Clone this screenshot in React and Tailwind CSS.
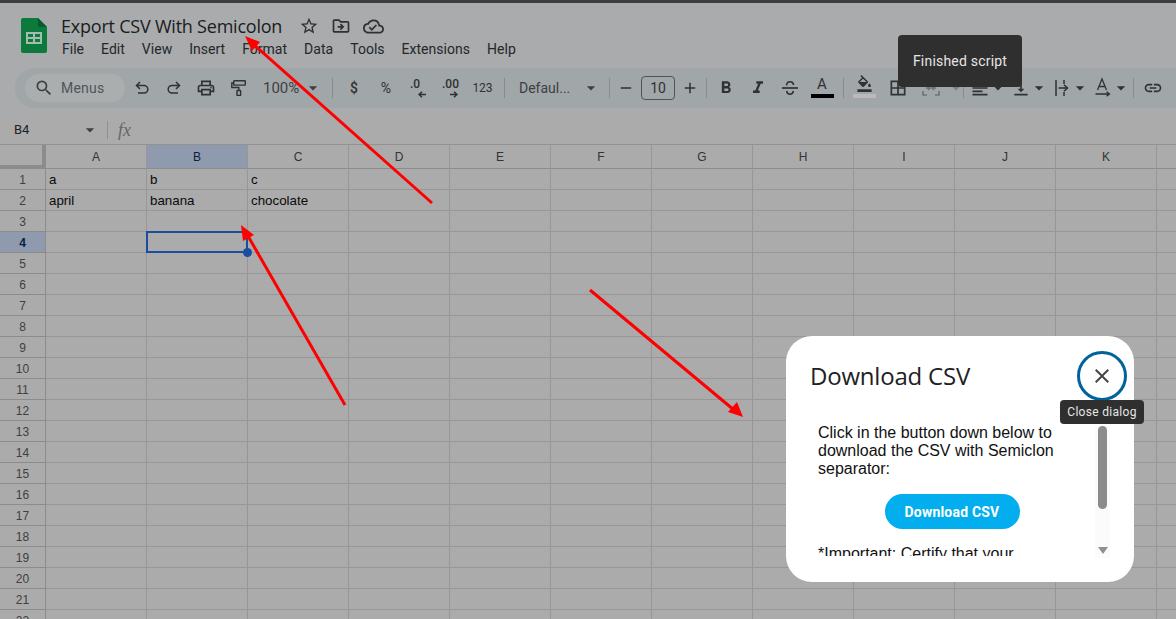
import React from "react";
import {
  MdOutlinePrint, MdFormatBold, MdFormatItalic,
  MdOutlineFormatColorFill, MdBorderAll, MdFormatAlignLeft, MdVerticalAlignBottom, MdLink, MdStarBorder,
  MdOutlineDriveFileMove, MdOutlineCloudDone, MdSearch, MdClose, MdAdd, MdRemove, MdArrowDropDown,
} from "react-icons/md";

const ink = "text-[#2f3133]";

function Slot({ w, children, className = "" }) {
  return <div className={`${w} h-[28px] shrink-0 flex items-center justify-center ${ink} ${className}`}>{children}</div>;
}
function Sep({ w }) {
  return (
    <div className={`${w} shrink-0 flex justify-center`}>
      <div className="w-px h-[20px] bg-[#888b8e]" />
    </div>
  );
}
function Caret({ w = "w-[4px]", className = "" }) {
  return (
    <Slot w={w} className={className}>
      <MdArrowDropDown className="shrink-0" size={20} />
    </Slot>
  );
}

function SheetsLogo() {
  return (
    <svg width="26" height="35" viewBox="0 0 26 35" className="shrink-0">
      <path d="M2 0H17L26 9V33a2 2 0 0 1-2 2H2a2 2 0 0 1-2-2V2a2 2 0 0 1 2-2Z" fill="#0c7a3c" />
      <path d="M17 0L26 9H19a2 2 0 0 1-2-2Z" fill="#075a2b" />
      <path d="M5 14H21V26H5ZM7 16V19H12V16ZM14 16V19H19V16ZM7 21V24H12V21ZM14 21V24H19V21Z" fill="#a6bcae" fillRule="evenodd" />
    </svg>
  );
}

function UndoIcon({ flip }) {
  return (
    <svg width="14" height="14" viewBox="0 0 14 14" fill="none" stroke="currentColor" strokeWidth="1.5" className={flip ? "-scale-x-100" : ""}>
      <path d="M5 1L1.5 4.5L5 8" />
      <path d="M2 4.5H9a3.7 3.7 0 0 1 0 7.6H3" />
    </svg>
  );
}
function PaintIcon() {
  return (
    <svg width="15" height="16" viewBox="0 0 15 16" fill="none" stroke="currentColor" strokeWidth="1.4">
      <rect x="2.7" y="0.7" width="11.6" height="4.4" rx="0.6" />
      <path d="M2.7 3H0.8V7.5H7.8V10.5" />
      <rect x="6" y="10.5" width="3.6" height="5" rx="0.6" />
    </svg>
  );
}
function StrikeIcon() {
  return (
    <svg width="18" height="16" viewBox="0 0 18 16" fill="none" stroke="currentColor" strokeWidth="1.5">
      <path d="M1 8H17" strokeWidth="1.7" />
      <path d="M5.5 5.5C5.7 3 7.2 1.8 9 1.8S12.4 3 12.6 5" />
      <path d="M5.6 11C6 13.2 7.3 14.2 9 14.2S12 13.2 12.4 11" />
    </svg>
  );
}
function DecimalArrow({ right }) {
  return (
    <svg width="8" height="7" viewBox="0 0 8 7" fill="none" stroke="currentColor" strokeWidth="1.5" className={right ? "" : "-scale-x-100"}>
      <path d="M0 3.5H7M4 0.8L7 3.5L4 6.2" />
    </svg>
  );
}
function WrapIcon() {
  return (
    <svg width="16" height="20" viewBox="0 0 16 20" fill="none" stroke="currentColor" strokeWidth="1.5">
      <path d="M2 2V18" />
      <path d="M10 2V6M10 14V18" />
      <path d="M4.5 10H13M10 6.8L13.5 10L10 13.2" />
    </svg>
  );
}
function RotateIcon() {
  return (
    <svg width="18" height="22" viewBox="0 0 18 22" fill="none" stroke="currentColor" strokeWidth="1.3">
      <path d="M3.5 13L8 2L12.5 13M5 9.5H11" />
      <path d="M1.5 17H15M12.5 14.8L15.5 17L12.5 19.2" />
    </svg>
  );
}
function MergeIcon() {
  return (
    <svg width="20" height="18" viewBox="0 0 20 18" fill="none" stroke="#6f7376" strokeWidth="1.6">
      <path d="M2 6V2H6M2 12V16H6M18 6V2H14M18 12V16H14" />
      <path d="M5 9H9M7 7L9 9L7 11M15 9H11M13 7L11 9L13 11" />
    </svg>
  );
}

function Toolbar() {
  return (
    <div className="ml-[15px] mt-[4px] h-[40px] rounded-l-[20px] bg-[#a1a6a9] flex items-center pl-[10px] font-['Roboto',sans-serif]">
      <div className="w-[100px] h-[28px] rounded-full bg-[#abaeaf] shrink-0 flex items-center pl-[9px] text-[#3d4043]">
        <MdSearch size={20} />
        <span className="ml-[7px] text-[14px] tracking-[0.2px] text-[#50545a]">Menus</span>
      </div>
      <div className="w-px shrink-0" />
      <Slot w="w-[32px]"><UndoIcon /></Slot>
      <Slot w="w-[32px]"><UndoIcon flip /></Slot>
      <Slot w="w-[32px]"><MdOutlinePrint size={20} /></Slot>
      <Slot w="w-[32px]"><PaintIcon /></Slot>
      <div className="w-[72px] h-[28px] shrink-0 flex items-center pl-[9px] text-[15px] text-[#3d4043]">
        <span>100%</span>
        <MdArrowDropDown className="ml-[4px] shrink-0" size={20} />
      </div>
      <Sep w="w-[12px]" />
      <Slot w="w-[32px]"><span className="text-[14px] font-medium">$</span></Slot>
      <Slot w="w-[32px]"><span className="text-[14px]">%</span></Slot>
      <Slot w="w-[32px]">
        <div className="flex flex-col leading-none w-[16px] -mt-[1px]">
          <span className="text-[12px] font-medium h-[13px] leading-[13px]">.0</span>
          <div className="pl-[8px]"><DecimalArrow /></div>
        </div>
      </Slot>
      <Slot w="w-[32px]">
        <div className="flex flex-col leading-none w-[16px] -mt-[1px]">
          <span className="text-[12px] font-medium h-[13px] leading-[13px]">.00</span>
          <div className="pl-[8px]"><DecimalArrow right /></div>
        </div>
      </Slot>
      <Slot w="w-[33px]"><span className="text-[12px]">123</span></Slot>
      <Sep w="w-[10px]" />
      <div className="w-[91px] h-[28px] shrink-0 flex items-center pl-[10px] text-[14px] text-[#3d4043]">
        <span className="w-[60px]">Defaul...</span>
        <MdArrowDropDown className="ml-[11px] shrink-0" size={20} />
      </div>
      <Sep w="w-[18px]" />
      <Slot w="w-[16px]"><MdRemove className="shrink-0" size={18} /></Slot>
      <Slot w="w-[48px]">
        <div className="w-[34px] h-[24px] rounded-[4px] border border-[#505356] flex items-center justify-center text-[14px]">10</div>
      </Slot>
      <Slot w="w-[16px]"><MdAdd className="shrink-0" size={18} /></Slot>
      <Sep w="w-[16px]" />
      <Slot w="w-[24px]"><MdFormatBold className="shrink-0" size={20} /></Slot>
      <Slot w="w-[40px]"><MdFormatItalic className="shrink-0" size={20} /></Slot>
      <Slot w="w-[24px]"><StrikeIcon /></Slot>
      <div className="w-[40px] h-[28px] pb-[4px] shrink-0 flex flex-col items-center justify-end">
        <span className="text-[15px] leading-[16px] text-[#2f3133]">A</span>
        <div className="w-[23px] h-[4px] mt-[2px] bg-black" />
      </div>
      <Sep w="w-[2px]" />
      <div className="w-[40px] h-[28px] pb-[4px] shrink-0 flex flex-col items-center justify-end text-[#2f3133]">
        <MdOutlineFormatColorFill className="mb-[2px]" size={17} />
        <div className="w-[23px] h-[4px] bg-[#b9bab9]" />
      </div>
      <Slot w="w-[28px]"><MdBorderAll className="shrink-0" size={20} /></Slot>
      <Slot w="w-[38px]"><MergeIcon /></Slot>
      <Caret w="w-[12px]" className="text-[#7c8083]" />
      <Sep w="w-[2px]" />
      <Slot w="w-[32px]"><MdFormatAlignLeft className="shrink-0" size={20} /></Slot>
      <Caret />
      <div className="w-[5px] shrink-0" />
      <Slot w="w-[32px]"><MdVerticalAlignBottom className="shrink-0" size={20} /></Slot>
      <Caret />
      <div className="w-[5px] shrink-0" />
      <Slot w="w-[32px]"><WrapIcon /></Slot>
      <Caret />
      <div className="w-[5px] shrink-0" />
      <Slot w="w-[32px]"><RotateIcon /></Slot>
      <Caret />
      <div className="w-[9px] shrink-0" />
      <Sep w="w-[2px]" />
      <Slot w="w-[38px]"><MdLink className="shrink-0" size={20} /></Slot>
    </div>
  );
}

const COLS = ["A", "B", "C", "D", "E", "F", "G", "H", "I", "J", "K", ""];
const DATA = { 1: ["a", "b", "c"], 2: ["april", "banana", "chocolate"] };
const ROWS = Array.from({ length: 22 }, (_, i) => i + 1);
const line = "border-r border-b border-[#979797]";

function Grid() {
  return (
    <div className="grid grid-cols-[46px_repeat(12,101px)] grid-rows-[24px_repeat(22,21px)] border-t border-[#929292] font-['Liberation_Sans',sans-serif]">
      <div className="border-r-[4px] border-b-[4px] border-[#8c8c8c] bg-[#ababab]" />
      {COLS.map((c) => (
        <div
          key={c || "L"}
          className={`${line} border-b-[#8c8c8c] flex items-center justify-center text-[12px] ${c === "B" ? "bg-[#8f9aae] text-[#0b1e3c] font-medium" : "text-[#333333]"}`}
        >
          {c}
        </div>
      ))}
      {ROWS.map((r) => (
        <React.Fragment key={r}>
          <div className={`border-r border-b border-[#8c8c8c] flex items-center justify-center pt-[1px] text-[12px] ${r === 4 ? "bg-[#8f9aae] text-[#0b1e3c] font-bold" : "text-[#3e4043]"}`}>
            {r}
          </div>
          {COLS.map((c, i) => (
            <div key={c || "L"} className={`relative ${r === 4 && c === "B" ? "z-10" : ""} ${line} flex items-end pl-[3px] pb-[1px] text-[13.33px] leading-[16px] text-[#0a0a0a]`}>
              {DATA[r] && DATA[r][i]}
              {r === 4 && c === "B" && (
                <div className="absolute -left-px -top-px w-[102px] h-[22px] border-2 border-[#1a4d9e]">
                  <div className="absolute -right-[6px] -bottom-[6px] w-[9px] h-[9px] rounded-full bg-[#1a4d9e]" />
                </div>
              )}
            </div>
          ))}
        </React.Fragment>
      ))}
    </div>
  );
}

function Arrows() {
  return (
    <svg className="absolute left-0 top-0 pointer-events-none z-20" width="1176" height="619" fill="none">
      <g stroke="#ff0000" strokeWidth="3">
        <path d="M432 203L252 43" />
        <path d="M345 405L248 236" />
        <path d="M590 290L734 410" />
      </g>
      <g fill="#ff0000">
        <path d="M245 36L260 42L252 51Z" />
        <path d="M241 225L254 235L243 241Z" />
        <path d="M743 417L728 412L737 402Z" />
      </g>
    </svg>
  );
}

function Dialog() {
  return (
    <div className="absolute z-30 left-[786px] top-[336px] w-[348px] h-[246px] rounded-[26px] bg-white flex flex-col">
      <div className="flex items-center h-[80px] pl-[24px] pr-[7px] shrink-0">
        <h2 className="flex-1 text-[24px] font-normal text-[#202124] font-['Open_Sans',sans-serif] tracking-[-0.2px]">Download CSV</h2>
        <button className="w-[50px] h-[50px] rounded-full border-[3px] border-[#00639b] flex items-center justify-center text-[#444746]">
          <MdClose size={24} />
        </button>
      </div>
      <div className="flex pl-[32px] h-[132px] mt-[10px]">
        <div className="w-[246px] h-[132px] overflow-hidden -mt-[2px] text-[16px] leading-[18px] text-[#111] font-['Liberation_Sans',sans-serif]">
          <p>Click in the button down below to download the CSV with Semiclon separator:</p>
          <div className="flex justify-center mt-[16px] pl-[22px]">
            <button className="w-[135px] h-[35px] rounded-full bg-[#03aeef] text-white text-[14px] font-bold font-['Roboto',sans-serif] tracking-[0.2px]">
              Download CSV
            </button>
          </div>
          <p className="mt-[16px]">*Important: Certify that your</p>
        </div>
        <div className="ml-[31px] w-[15px] h-[132px] bg-[#fbfbfb] flex flex-col items-center relative">
          <div className="w-[9px] h-[83px] rounded-full bg-[#8b8b8b]" />
          <div className="absolute bottom-[4px] w-0 h-0 border-l-[5px] border-r-[5px] border-t-[7px] border-l-transparent border-r-transparent border-t-[#909090]" />
        </div>
      </div>
    </div>
  );
}

export default function App() {
  return (
    <div className="relative w-[1176px] h-[619px] overflow-hidden bg-[#ababab] font-['Roboto',sans-serif]">
      <div className="bg-[#a9abad] h-[116px]">
        <div className="h-[3px] bg-[#3c3d3e]" />
        <div className="flex h-[61px] pl-[21px] pt-[15px]">
          <SheetsLogo />
          <div className="ml-[14px] -mt-[5px]">
            <div className="flex items-center h-[26px]">
              <span className="text-[18px] text-[#1b1c1d] w-[227px] font-['Open_Sans',sans-serif] tracking-[-0.22px]">Export CSV With Semicolon</span>
              <div className="flex items-center gap-[12px] text-[#2f3133] ml-[11px]">
                <MdStarBorder size={20} />
                <MdOutlineDriveFileMove size={20} />
                <MdOutlineCloudDone size={21} />
              </div>
            </div>
            <nav className="flex gap-[17px] text-[14px] tracking-[0.02px] text-[#24272b] ml-px mt-[1px] leading-[18px]">
              {["File", "Edit", "View", "Insert", "Format", "Data", "Tools", "Extensions", "Help"].map((m) => (
                <span key={m}>{m}</span>
              ))}
            </nav>
          </div>
        </div>
        <Toolbar />
      </div>
      <div className="h-[28px] flex items-center pl-[14px] text-[13px] text-[#1f2123] font-['Roboto',sans-serif]">
        <span className="w-[66px]">B4</span>
        <MdArrowDropDown size={20} className="text-[#3d4043]" />
        <div className="ml-[7px] w-px h-[18px] bg-[#8f8f8f]" />
        <span className="ml-[10px] text-[18px] italic font-['Liberation_Serif',serif] text-[#666666]">fx</span>
      </div>
      <Grid />
      <Arrows />
      <Dialog />
      <div className="absolute z-30 left-[898px] top-[35px] w-[124px] h-[52px] rounded-[4px] bg-[#2f2f2f] flex items-center justify-center text-[14px] tracking-[0.2px] text-[#e6e6e6]">
        Finished script
      </div>
      <div className="absolute z-30 left-[1060px] top-[400px] w-[84px] h-[24px] rounded-[4px] bg-[#2f2f2f] flex items-center justify-center text-[12px] tracking-[0.3px] text-[#e6e6e6]">
        Close dialog
      </div>
    </div>
  );
}
